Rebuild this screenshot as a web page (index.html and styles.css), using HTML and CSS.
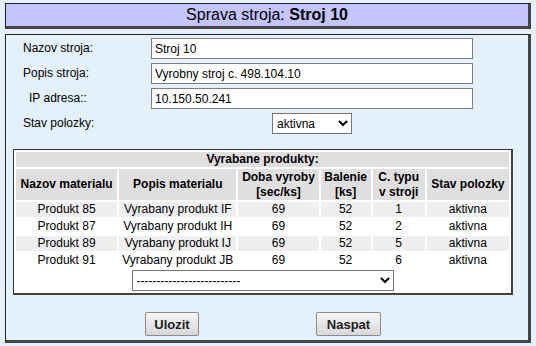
FILE: index.html
```html
<!DOCTYPE html>
<html lang="sk">
<head>
    <meta charset="UTF-8">
    <meta name="viewport" content="width=device-width, initial-scale=1.0">
    <title>Sprava stroja</title>
    <link rel="stylesheet" href="styles.css">
</head>
<body>
    <div class="header">Sprava stroja: <b>Stroj 10</b></div>

    <div class="main">
        <div class="form-grid">
            <label for="nazov">Nazov stroja:</label>
            <input type="text" id="nazov" value="Stroj 10">

            <label for="popis">Popis stroja:</label>
            <input type="text" id="popis" value="Vyrobny stroj c. 498.104.10">

            <label for="ip" class="indent">IP adresa::</label>
            <input type="text" id="ip" value="10.150.50.241">

            <label for="stav">Stav polozky:</label>
            <div class="stav-cell">
                <select id="stav" class="stav-select">
                    <option>aktivna</option>
                    <option>neaktivna</option>
                </select>
            </div>
        </div>

        <table class="products">
            <colgroup>
                <col style="width: 101px">
                <col style="width: 117px">
                <col style="width: 80px">
                <col style="width: 50px">
                <col style="width: 52px">
                <col style="width: 82px">
            </colgroup>
            <thead>
                <tr>
                    <th colspan="6" class="caption">Vyrabane produkty:</th>
                </tr>
                <tr>
                    <th>Nazov materialu</th>
                    <th>Popis materialu</th>
                    <th>Doba vyroby<br>[sec/ks]</th>
                    <th>Balenie<br>[ks]</th>
                    <th>C. typu<br>v stroji</th>
                    <th>Stav polozky</th>
                </tr>
            </thead>
            <tbody>
                <tr class="odd">
                    <td>Produkt 85</td>
                    <td>Vyrabany produkt IF</td>
                    <td>69</td>
                    <td>52</td>
                    <td>1</td>
                    <td>aktivna</td>
                </tr>
                <tr>
                    <td>Produkt 87</td>
                    <td>Vyrabany produkt IH</td>
                    <td>69</td>
                    <td>52</td>
                    <td>2</td>
                    <td>aktivna</td>
                </tr>
                <tr class="odd">
                    <td>Produkt 89</td>
                    <td>Vyrabany produkt IJ</td>
                    <td>69</td>
                    <td>52</td>
                    <td>5</td>
                    <td>aktivna</td>
                </tr>
                <tr>
                    <td>Produkt 91</td>
                    <td>Vyrabany produkt JB</td>
                    <td>69</td>
                    <td>52</td>
                    <td>6</td>
                    <td>aktivna</td>
                </tr>
                <tr>
                    <td colspan="6" class="add-cell">
                        <select class="add-select">
                            <option>--------------------------</option>
                        </select>
                    </td>
                </tr>
            </tbody>
        </table>

        <div class="buttons">
            <button class="btn-save">Ulozit</button>
            <button class="btn-back">Naspat</button>
        </div>
    </div>
</body>
</html>
```

FILE: styles.css
```css
body {
    margin: 3px 5px;
    font-family: "Liberation Sans", Arial, sans-serif;
    font-size: 12px;
    color: #000;
    background-color: #e4f0fa;
}
.header {
    height: 22px;
    line-height: 22px;
    text-align: center;
    font-size: 16px;
    background-color: #c4c4ff;
    border-style: solid;
    border-color: #222 #444 #444 #222;
    border-width: 1px 3px 3px 1px;
}
.main {
    margin-top: 5px;
    height: 302px;
    padding-top: 3px;
    background-color: #e4f0fa;
    border-style: solid;
    border-color: #222 #444 #444 #222;
    border-width: 1px 3px 3px 1px;
}
.form-grid {
    display: grid;
    grid-template-columns: 128px 322px;
    row-gap: 4px;
    margin-left: 17px;
    align-items: center;
}
.form-grid label {
    line-height: 21px;
}
.form-grid .indent {
    padding-left: 6px;
}
.form-grid input {
    box-sizing: border-box;
    height: 21px;
    margin: 0;
    padding: 0 3px;
    border: 1px solid #7f7f7f;
    background: white;
    font-family: inherit;
    font-size: 12px;
}
.stav-cell {
    text-align: center;
}
select {
    box-sizing: border-box;
    height: 21px;
    margin: 0;
    border: 1px solid #767676;
    border-radius: 0;
    background: white;
    font-family: inherit;
    font-size: 12px;
    color: #000;
}
.stav-select {
    width: 80px;
}
.products {
    margin: 15px 0 0 7px;
    width: 500px;
    table-layout: fixed;
    border-spacing: 2px;
    background: white;
    border-style: solid;
    border-color: #333 #444 #444 #333;
    border-width: 1px 2px 2px 1px;
}
.products th, .products td {
    padding: 0;
    text-align: center;
    line-height: 15px;
}
.products th {
    background-color: #e0dfe0;
    height: 31px;
}
.products th.caption {
    height: 15px;
}
.products tr.odd td {
    background-color: #efeff1;
}
.products td.add-cell {
    height: 21px;
}
.add-select {
    width: 262px;
    text-align: left;
}
.buttons {
    display: flex;
    margin-top: 17px;
    padding-left: 139px;
    gap: 117px;
}
.buttons button {
    height: 24px;
    padding: 0;
    font-family: inherit;
    font-size: 13px;
    font-weight: bold;
    color: #222;
    background: linear-gradient(#f6f6f6, #d8d8d8);
    border: 1px solid #8a8a8a;
    border-radius: 2px;
}
.btn-save {
    width: 54px;
}
.btn-back {
    width: 65px;
}
```
